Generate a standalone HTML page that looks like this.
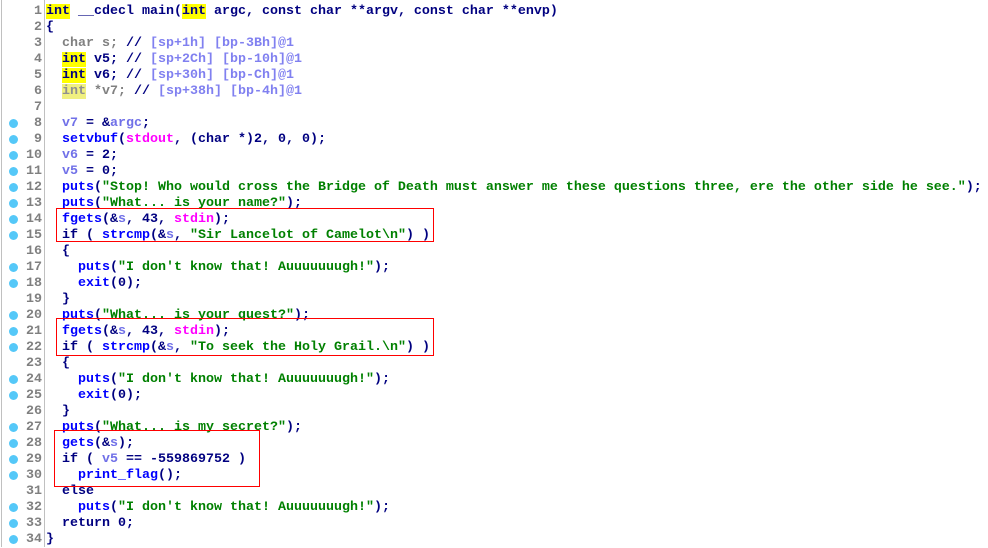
<!DOCTYPE html>
<html><head><meta charset="utf-8"><style>
body{margin:0;width:988px;height:547px;background:#fff;overflow:hidden;position:relative;font-family:"Liberation Mono",monospace;font-weight:bold;font-size:13.33px;}
#w{position:absolute;left:0;top:2px;width:988px;height:545px}
.l{position:absolute;left:0;height:16px;line-height:16px;white-space:pre;width:988px}
.n{position:absolute;left:0;width:42px;text-align:right;color:#808080}
.c{position:absolute;left:46px;color:#000080}
.d{position:absolute;left:9px;top:3px;width:9px;height:9px;border-radius:50%;background:#55c8f8}
.k{background:#ffff00}
.kf{background:#f0f080;color:#909090}
.g{color:#808080}
.v{color:#7070e8}
.cm{color:#8080f0}
.s{color:#008000}
.f{color:#0000ff}
.m{color:#ff00ff}
.box{position:absolute;border:1px solid #f00}
</style></head><body>
<div style="position:absolute;left:1px;top:0;width:1px;height:547px;background:#c0c0c0"></div>
<div style="position:absolute;left:44px;top:0;width:1px;height:547px;background:#c0c0c0"></div>
<div id="w">
<div class="l" style="top:2px"><span class="n">1</span><span class="c"><span class="k">int</span> __cdecl main(<span class="k">int</span> argc, const char **argv, const char **envp)</span></div>
<div class="l" style="top:18px"><span class="n">2</span><span class="c">{</span></div>
<div class="l" style="top:34px"><span class="n">3</span><span class="c">  <span class="g">char s;</span> // <span class="cm">[sp+1h] [bp-3Bh]@1</span></span></div>
<div class="l" style="top:50px"><span class="n">4</span><span class="c">  <span class="k">int</span> v5; // <span class="cm">[sp+2Ch] [bp-10h]@1</span></span></div>
<div class="l" style="top:66px"><span class="n">5</span><span class="c">  <span class="k">int</span> v6; // <span class="cm">[sp+30h] [bp-Ch]@1</span></span></div>
<div class="l" style="top:82px"><span class="n">6</span><span class="c">  <span class="kf">int</span><span class="g"> *v7;</span> // <span class="cm">[sp+38h] [bp-4h]@1</span></span></div>
<div class="l" style="top:98px"><span class="n">7</span></div>
<div class="l" style="top:114px"><span class="d"></span><span class="n">8</span><span class="c">  <span class="v">v7</span> = &amp;<span class="v">argc</span>;</span></div>
<div class="l" style="top:130px"><span class="d"></span><span class="n">9</span><span class="c">  <span class="f">setvbuf</span>(<span class="m">stdout</span>, (char *)2, 0, 0);</span></div>
<div class="l" style="top:146px"><span class="d"></span><span class="n">10</span><span class="c">  <span class="v">v6</span> = 2;</span></div>
<div class="l" style="top:162px"><span class="d"></span><span class="n">11</span><span class="c">  <span class="v">v5</span> = 0;</span></div>
<div class="l" style="top:178px"><span class="d"></span><span class="n">12</span><span class="c">  <span class="f">puts</span>(<span class="s">"Stop! Who would cross the Bridge of Death must answer me these questions three, ere the other side he see."</span>);</span></div>
<div class="l" style="top:194px"><span class="d"></span><span class="n">13</span><span class="c">  <span class="f">puts</span>(<span class="s">"What... is your name?"</span>);</span></div>
<div class="l" style="top:210px"><span class="d"></span><span class="n">14</span><span class="c">  <span class="f">fgets</span>(&amp;<span class="v">s</span>, 43, <span class="m">stdin</span>);</span></div>
<div class="l" style="top:226px"><span class="d"></span><span class="n">15</span><span class="c">  if ( <span class="f">strcmp</span>(&amp;<span class="v">s</span>, <span class="s">"Sir Lancelot of Camelot\n"</span>) )</span></div>
<div class="l" style="top:242px"><span class="n">16</span><span class="c">  {</span></div>
<div class="l" style="top:258px"><span class="d"></span><span class="n">17</span><span class="c">    <span class="f">puts</span>(<span class="s">"I don't know that! Auuuuuuugh!"</span>);</span></div>
<div class="l" style="top:274px"><span class="d"></span><span class="n">18</span><span class="c">    <span class="f">exit</span>(0);</span></div>
<div class="l" style="top:290px"><span class="n">19</span><span class="c">  }</span></div>
<div class="l" style="top:306px"><span class="d"></span><span class="n">20</span><span class="c">  <span class="f">puts</span>(<span class="s">"What... is your quest?"</span>);</span></div>
<div class="l" style="top:322px"><span class="d"></span><span class="n">21</span><span class="c">  <span class="f">fgets</span>(&amp;<span class="v">s</span>, 43, <span class="m">stdin</span>);</span></div>
<div class="l" style="top:338px"><span class="d"></span><span class="n">22</span><span class="c">  if ( <span class="f">strcmp</span>(&amp;<span class="v">s</span>, <span class="s">"To seek the Holy Grail.\n"</span>) )</span></div>
<div class="l" style="top:354px"><span class="n">23</span><span class="c">  {</span></div>
<div class="l" style="top:370px"><span class="d"></span><span class="n">24</span><span class="c">    <span class="f">puts</span>(<span class="s">"I don't know that! Auuuuuuugh!"</span>);</span></div>
<div class="l" style="top:386px"><span class="d"></span><span class="n">25</span><span class="c">    <span class="f">exit</span>(0);</span></div>
<div class="l" style="top:402px"><span class="n">26</span><span class="c">  }</span></div>
<div class="l" style="top:418px"><span class="d"></span><span class="n">27</span><span class="c">  <span class="f">puts</span>(<span class="s">"What... is my secret?"</span>);</span></div>
<div class="l" style="top:434px"><span class="d"></span><span class="n">28</span><span class="c">  <span class="f">gets</span>(&amp;<span class="v">s</span>);</span></div>
<div class="l" style="top:450px"><span class="d"></span><span class="n">29</span><span class="c">  if ( <span class="v">v5</span> == -559869752 )</span></div>
<div class="l" style="top:466px"><span class="d"></span><span class="n">30</span><span class="c">    <span class="f">print_flag</span>();</span></div>
<div class="l" style="top:482px"><span class="n">31</span><span class="c">  else</span></div>
<div class="l" style="top:498px"><span class="d"></span><span class="n">32</span><span class="c">    <span class="f">puts</span>(<span class="s">"I don't know that! Auuuuuuugh!"</span>);</span></div>
<div class="l" style="top:514px"><span class="d"></span><span class="n">33</span><span class="c">  return 0;</span></div>
<div class="l" style="top:530px"><span class="d"></span><span class="n">34</span><span class="c">}</span></div>
</div>
<div class="box" style="left:56px;top:208px;width:376px;height:32px"></div>
<div class="box" style="left:56px;top:318px;width:376px;height:36px"></div>
<div class="box" style="left:54px;top:430px;width:204px;height:55px"></div>
</body></html>
